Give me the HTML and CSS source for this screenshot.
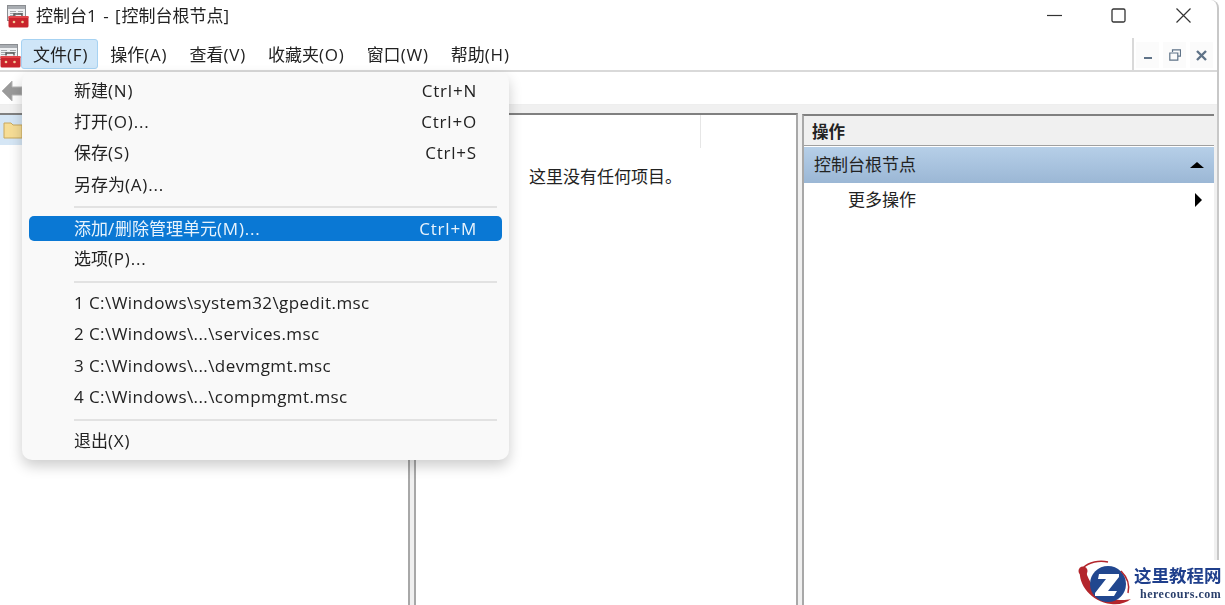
FILE: index.html
```html
<!DOCTYPE html>
<html lang="zh-CN">
<head>
<meta charset="utf-8">
<title>控制台1</title>
<link rel="stylesheet" href="styles.css">
</head>
<body>
<div class="window">
  <header class="titlebar">
    <svg class="app-icon" viewBox="0 0 22 23" width="22" height="23">
      <rect x="0.500" y="0.500" width="18" height="15" fill="#eef0f2" stroke="#8a8d91"/>
      <rect x="1" y="1" width="17" height="3" fill="#a9adb2"/>
      <path d="M3 6.500h6M3 8.500h6M3 10.500h6M11 6.500h5M11 8.500h5" stroke="#a5a8ac"/>
      <path d="M7 11.500V9h8v2.500" fill="none" stroke="#555" stroke-width="1.400"/>
      <rect x="1.500" y="11" width="20" height="11.500" rx="1.500" fill="#c9242c"/>
      <rect x="1.500" y="11" width="20" height="2" fill="#e0454a"/>
      <circle cx="7" cy="17" r="1.300" fill="#f2cf9a"/>
      <circle cx="15.500" cy="17" r="1.300" fill="#f2cf9a"/>
    </svg>
    <span class="title-text">控制台<span class="la">1 - [</span>控制台根节点<span class="la">]</span></span>
    <div class="caption">
      <svg viewBox="0 0 15 15" width="15" height="15" class="cap-min"><path d="M0 7.500h15" stroke="#333" stroke-width="1.200"/></svg>
      <svg viewBox="0 0 15 15" width="15" height="15" class="cap-max"><rect x="1" y="1" width="13" height="13" rx="1.500" fill="none" stroke="#333" stroke-width="1.300"/></svg>
      <svg viewBox="0 0 15 15" width="15" height="15" class="cap-close"><path d="M0.500 0.500l14 14M14.500 0.500l-14 14" stroke="#333" stroke-width="1.200"/></svg>
    </div>
  </header>

  <nav class="menubar">
    <svg class="menu-icon" viewBox="0 0 22 24" width="22" height="24">
      <rect x="-0.500" y="0.500" width="18" height="15" fill="#eef0f2" stroke="#8a8d91"/>
      <rect x="0" y="1" width="17" height="3" fill="#a9adb2"/>
      <path d="M1 6.500h6M1 8.500h6M1 10.500h6M10 6.500h6M10 8.500h6" stroke="#a5a8ac"/>
      <path d="M6 11.500V9h8v2.500" fill="none" stroke="#555" stroke-width="1.400"/>
      <rect x="0.500" y="12" width="20" height="11.500" rx="1.500" fill="#c9242c"/>
      <rect x="0.500" y="12" width="20" height="2" fill="#e0454a"/>
      <circle cx="6" cy="18" r="1.300" fill="#f2cf9a"/>
      <circle cx="14.500" cy="18" r="1.300" fill="#f2cf9a"/>
    </svg>
    <span class="menu-item is-open">文件<span class="la">(F)</span></span>
    <span class="menu-item">操作<span class="la">(A)</span></span>
    <span class="menu-item">查看<span class="la">(V)</span></span>
    <span class="menu-item">收藏夹<span class="la">(O)</span></span>
    <span class="menu-item">窗口<span class="la">(W)</span></span>
    <span class="menu-item">帮助<span class="la">(H)</span></span>
    <div class="mdi">
      <span class="mdi-btn"><svg viewBox="0 0 10 10" width="10" height="10"><path d="M1 8h8" stroke="#5f7388" stroke-width="2"/></svg></span>
      <span class="mdi-btn"><svg viewBox="0 0 12 12" width="12" height="12"><path d="M3.500 3V.8h8v6.400H9M.8 4h8v7.200h-8z" fill="none" stroke="#5f7388" stroke-width="1.200"/></svg></span>
      <span class="mdi-btn"><svg viewBox="0 0 11 11" width="11" height="11"><path d="M1 1l9 9M10 1l-9 9" stroke="#5f7388" stroke-width="2.400"/></svg></span>
    </div>
  </nav>

  <div class="toolbar">
    <svg viewBox="0 0 20 22" width="20" height="22"><path d="M10 1L0 11l10 10v-6h10V7H10z" fill="#9a9a9a" stroke="#b5b5b5"/></svg>
  </div>

  <div class="panes">
    <section class="tree">
      <div class="tree-row">
        <svg viewBox="0 0 20 19" width="20" height="19"><path d="M1 3h7l2 2h9v13H1z" fill="#f6dd96" stroke="#c9a85c"/></svg>
      </div>
    </section>
    <section class="center">
      <div class="col-head"><span class="col-divider"></span></div>
      <p class="empty">这里没有任何项目。</p>
    </section>
    <section class="actions">
      <h2 class="actions-title">操作</h2>
      <div class="actions-group"><span>控制台根节点</span><i class="tri-up"></i></div>
      <div class="actions-item"><span>更多操作</span><i class="tri-right"></i></div>
    </section>
  </div>
</div>

<div class="popup">
  <div class="row"><span>新建<span class="la">(N)</span></span><span class="la">Ctrl+N</span></div>
  <div class="row"><span>打开<span class="la">(O)...</span></span><span class="la">Ctrl+O</span></div>
  <div class="row"><span>保存<span class="la">(S)</span></span><span class="la">Ctrl+S</span></div>
  <div class="row"><span>另存为<span class="la">(A)...</span></span></div>
  <hr class="sep sep-a">
  <div class="row is-active"><span>添加<span class="la">/</span>删除管理单元<span class="la">(M)...</span></span><span class="la">Ctrl+M</span></div>
  <div class="row"><span>选项<span class="la">(P)...</span></span></div>
  <hr class="sep sep-b">
  <div class="row"><span class="la path">1 C:\Windows\system32\gpedit.msc</span></div>
  <div class="row"><span class="la path">2 C:\Windows\...\services.msc</span></div>
  <div class="row"><span class="la path">3 C:\Windows\...\devmgmt.msc</span></div>
  <div class="row"><span class="la path">4 C:\Windows\...\compmgmt.msc</span></div>
  <hr class="sep sep-c">
  <div class="row"><span>退出<span class="la">(X)</span></span></div>
</div>

<div class="brand">
  <svg viewBox="0 0 56 45" width="56" height="45">
    <path d="M3 10C1 24 14 42 34 44c8 1 15-1 20-5-12 3-34 1-44-24 0-3-1-6-7-5z" fill="#b3262c"/>
    <circle cx="6" cy="11" r="4.500" fill="#b3262c"/>
    <path d="M6 8c6-6 16-8 25-6" fill="none" stroke="#b3262c" stroke-width="1.500"/>
    <circle cx="31" cy="24" r="18" fill="#21478f"/>
    <path d="M22 14h20v3L31 31h9l-3 5H18v-3l11-14h-8z" fill="#fff"/>
    <path d="M44 11c6 6 9 14 7 22" fill="none" stroke="#b3262c" stroke-width="1.500"/>
  </svg>
  <div class="brand-text">
    <strong>这里教程网</strong>
    <em>herecours.com</em>
  </div>
</div>
</body>
</html>
```
FILE: styles.css
```css
* { box-sizing: border-box; }
html, body { margin: 0; padding: 0; height: 100%; }
body {
  width: 1225px;
  height: 605px;
  overflow: hidden;
  position: relative;
  background: #fff;
  color: #222;
  font: 17px/22px "Open Sans", "Noto Sans CJK SC", sans-serif;
  filter: blur(.35px);
}
.la { letter-spacing: .8px; }
.path { letter-spacing: .42px; }
.window {
  width: 1219px;
  height: 605px;
  border-right: 2px solid #c8c8c8;
  border-top-right-radius: 8px;
  display: flex;
  flex-direction: column;
  background: #fff;
}
.titlebar {
  height: 38px;
  display: flex;
  align-items: center;
  padding-left: 7px;
  flex: none;
}
.app-icon { margin-right: 7px; margin-top: -6px; }
.title-text { margin-top: -6px; white-space: nowrap; }
.title-text .la { letter-spacing: 1px; }
.caption { margin-left: auto; display: flex; margin-top: -8px; }
.cap-min { margin-right: 49px; }
.cap-max { margin-right: 50px; }
.cap-close { margin-right: 26px; }
.menubar {
  height: 34px;
  flex: none;
  display: flex;
  align-items: flex-start;
  border-bottom: 2px solid #d9d9d9;
  position: relative;
}
.menu-icon { flex: none; margin-top: 6px; margin-right: -1px; }
.menu-item {
  height: 30px;
  line-height: 30px;
  margin-top: 1px;
  padding: 0 9px 0 11px;
  border: 1px solid transparent;
  border-radius: 3px;
  white-space: nowrap;
}
.is-open { background: #cfe6f8; border-color: #a6d2f2; }
.mdi {
  margin-left: auto;
  margin-right: 4px;
  height: 32px;
  padding: 4px 0 0 2px;
  display: flex;
  gap: 4px;
  border-left: 2px solid #d9d9d9;
}
.mdi-btn {
  width: 23px;
  height: 26px;
  background: #fbfbfb;
  display: flex;
  align-items: center;
  justify-content: center;
}
.toolbar {
  height: 33px;
  flex: none;
  padding: 8px 0 0 2px;
  border-bottom: 1px solid #eee;
}
.toolbar svg { display: block; }
.panes {
  flex: 1;
  min-height: 0;
  display: flex;
  background: #f0f0f0;
  padding-top: 8px;
  gap: 4px;
}
.tree {
  width: 410px;
  background: #fff;
  border-right: 2px solid #a8a8a8;
  border-top: 2px solid #808080;
}
.tree-row {
  width: 60px;
  height: 30px;
  background: #d5e6f5;
  padding: 5px 0 0 3px;
}
.tree-row svg { display: block; }
.center {
  width: 384px;
  background: #fff;
  border-left: 2px solid #a8a8a8;
  border-right: 2px solid #a8a8a8;
  border-top: 2px solid #808080;
}
.col-head { height: 35px; padding-left: 284px; }
.col-divider { display: block; width: 1px; height: 33px; background: #e6e6e6; }
.empty { margin: 16px 0 0 113px; }
.actions {
  width: 412px;
  background: #fff;
  border-left: 2px solid #a8a8a8;
  border-top: 2px solid #808080;
  margin-top: 1px;
}
.actions-title {
  margin: 0;
  height: 30px;
  padding-left: 8px;
  font-size: 16.500px;
  line-height: 31px;
  font-weight: 700;
  background: #f0f0f0;
  border-bottom: 1px solid #a0a0a0;
}
.actions-group {
  height: 36px;
  margin-top: 1px;
  padding: 0 10px 0 10px;
  display: flex;
  justify-content: space-between;
  align-items: center;
  background: linear-gradient(#b6cfe8, #9bb7d5);
}
.actions-item {
  height: 34px;
  padding: 0 12px 0 44px;
  display: flex;
  justify-content: space-between;
  align-items: center;
}
.tri-up {
  width: 0; height: 0;
  border-left: 7px solid transparent;
  border-right: 7px solid transparent;
  border-bottom: 6px solid #000;
}
.tri-right {
  width: 0; height: 0;
  border-top: 7px solid transparent;
  border-bottom: 7px solid transparent;
  border-left: 7px solid #000;
}
.popup {
  position: absolute;
  left: 22px;
  top: 72px;
  width: 487px;
  height: 388px;
  padding: 3px 7px 0;
  background: #f9f9f9;
  border-radius: 10px;
  box-shadow: 0 6px 14px rgba(0, 0, 0, .2);
}
.row {
  height: 31.300px;
  padding: 0 25px 0 45px;
  display: flex;
  justify-content: space-between;
  align-items: center;
  white-space: nowrap;
}
.is-active {
  height: 25px;
  margin: 2px 0 2px;
  background: #0a78d4;
  color: #e8f3fc;
  border-radius: 5px;
}
.sep {
  height: 2px;
  margin: 6px 5px 4px 45px;
  border: 0;
  background: #e2e2e2;
}
.sep-a { margin-bottom: 8px; }
.sep-b { margin-top: 7px; }
.sep-c { margin-bottom: 5px; }
.brand {
  position: absolute;
  left: 1077px;
  top: 560px;
  width: 148px;
  height: 45px;
  background: #fff;
  display: flex;
}
.brand-text {
  margin-left: 1px;
  display: flex;
  flex-direction: column;
  font-family: "Liberation Serif", "Noto Sans CJK SC", serif;
  color: #1f3f8c;
}
.brand-text strong { font-size: 17.500px; line-height: 20px; margin-top: 6px; white-space: nowrap; }
.brand-text em { font-style: normal; font-weight: 700; font-size: 12px; letter-spacing: .5px; line-height: 12px; margin: 2px 0 0 6px; color: #2a3f6b; white-space: nowrap; }
```
